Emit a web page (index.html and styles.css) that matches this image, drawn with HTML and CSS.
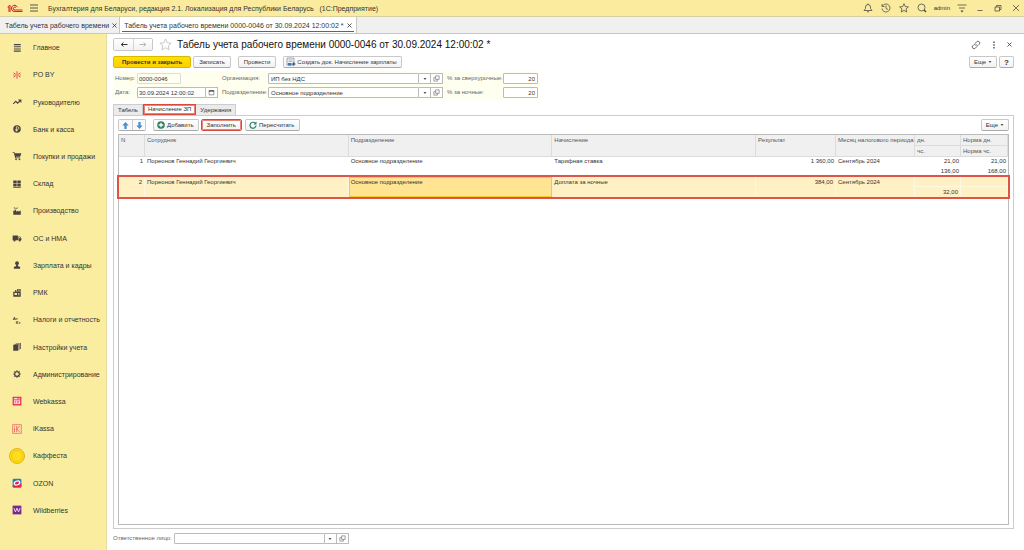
FILE: index.html
```html
<!DOCTYPE html>
<html lang="ru">
<head>
<meta charset="utf-8">
<title>Табель учета рабочего времени</title>
<link rel="stylesheet" href="styles.css">
</head>
<body>
<svg class="defs" aria-hidden="true">
  <symbol id="open" viewBox="0 0 12 12"><path d="M4.500 1.500h6v6h-6zM4.500 4.500h-3v6h6v-3" fill="none" stroke="#777" stroke-width="1.200"/></symbol>
  <symbol id="caret" viewBox="0 0 6 4"><path d="M0 0h6L3 4z" fill="#555"/></symbol>
  <symbol id="cross" viewBox="0 0 10 10"><path d="M1 1l8 8M9 1l-8 8" fill="none" stroke="currentColor" stroke-width="1.600"/></symbol>
</svg>
<header class="topbar">
  <svg class="logo" viewBox="0 0 32 18"><g fill="none" stroke="#d8232a" stroke-width="2"><path d="M1 6L6 2.500V16M2.500 7.500L4 6.500V16"/><path d="M21 6.500A6.300 6.300 0 1 0 16 15h15"/><path d="M18 7.500A3 3 0 1 0 16 12h15"/></g></svg>
  <button class="bare" aria-label="Меню"><svg class="i10" viewBox="0 0 10 10"><path d="M1 2h8M1 5h8M1 8h8" stroke="#555" stroke-width="1"/></svg></button>
  <span class="app-title">Бухгалтерия для Беларуси, редакция 2.1. Локализация для Республики Беларусь&nbsp;&nbsp; (1С:Предприятие)</span>
  <nav class="top-icons">
    <button class="bare" aria-label="Уведомления"><svg class="i10" viewBox="0 0 20 20"><path d="M2 15h16l-3-4V8a5 5 0 0 0-10 0v3zM8 17.500h4M10 1v2" class="ln"/></svg></button>
    <button class="bare" aria-label="История"><svg class="i10" viewBox="0 0 20 20"><path d="M3 6a8 8 0 1 1-1 5M2 2v5h5M10 5v6l4 2" class="ln"/></svg></button>
    <button class="bare" aria-label="Избранное"><svg class="i10" viewBox="0 0 20 20"><path d="M10 1.500l2.600 5.700 6.100.6-4.600 4.100 1.400 6.100L10 14.800 4.500 18l1.400-6.100L1.300 7.800l6.100-.6z" class="ln"/></svg></button>
    <button class="bare" aria-label="Поиск"><svg class="i10" viewBox="0 0 20 20"><circle cx="9" cy="9" r="7" class="ln"/><path d="M14 14l4 4" class="ln thick"/></svg></button>
    <span class="user">admin</span>
    <button class="bare" aria-label="Настройки"><svg class="i10" viewBox="0 0 20 20"><path d="M1 4h18M4 10h12" class="ln"/><path d="M7 15h6l-3 4z" fill="#444"/></svg></button>
    <button class="bare" aria-label="Свернуть"><svg class="i10" viewBox="0 0 20 20"><path d="M5 15h10" class="ln"/></svg></button>
    <button class="bare" aria-label="Восстановить"><svg class="i10" viewBox="0 0 20 20"><path d="M4 8h9v8H4zM7 8V5h9v8h-3" class="ln"/></svg></button>
    <button class="bare" aria-label="Закрыть"><svg class="i10" viewBox="0 0 20 20"><path d="M4 4l12 12M16 4L4 16" class="ln"/></svg></button>
  </nav>
</header>
<nav class="windows">
  <div class="window-tab"><a href="#">Табель учета рабочего времени</a><button class="bare" aria-label="Закрыть"><svg class="i5"><use href="#cross"/></svg></button></div>
  <div class="window-tab current"><a href="#">Табель учета рабочего времени 0000-0046 от 30.09.2024 12:00:02 *</a><button class="bare" aria-label="Закрыть"><svg class="i5"><use href="#cross"/></svg></button></div>
</nav>
<div class="body">
<nav class="sidebar">
  <a href="#"><svg viewBox="0 0 16 16"><path d="M3 2.500h11M3 6h11M3 9.500h11M3 13h11" stroke="#444" stroke-width="1.800"/></svg>Главное</a>
  <a href="#"><svg viewBox="0 0 16 16"><path d="M8 2v12M2.500 4.500L6 7M2.500 11.500L6 9M13.500 4.500L10 7M13.500 11.500L10 9M2 8h2M12 8h2" stroke="#e23c4c" stroke-width="1.500"/></svg>PO BY</a>
  <a href="#"><svg viewBox="0 0 16 16"><path d="M2 11l4-4 3 3 4-4" fill="none" stroke="#4a4242" stroke-width="1.800"/><path d="M9.500 4H15v5.500z" fill="#4a4242"/></svg>Руководителю</a>
  <a href="#"><svg viewBox="0 0 16 16"><circle cx="8" cy="8" r="6" fill="#4a4242"/><path d="M7 12V4.500h2a2 2 0 0 1 0 4H5.500M5.500 10.500h4" fill="none" stroke="#faeda0" stroke-width="1.200"/></svg>Банк и касса</a>
  <a href="#"><svg viewBox="0 0 16 16"><path d="M1 2h3l.5 1.500H15L13 9H6l.4 1.300H13v1.200H5.200L3 3.200H1z" fill="#4a4242"/><circle cx="6.500" cy="13.300" r="1.400" fill="#4a4242"/><circle cx="12" cy="13.300" r="1.400" fill="#4a4242"/></svg>Покупки и продажи</a>
  <a href="#"><svg viewBox="0 0 16 16"><path d="M2 2.500h5.500v4.500H2zM8.500 2.500H14v4.500H8.500zM2 8h5.500v4H2zM8.500 8H14v4H8.500zM2 12.800h12v1.200H2z" fill="#4a4242"/></svg>Склад</a>
  <a href="#"><svg viewBox="0 0 16 16"><path d="M2 14V7l2 1.500V6h2.500v3L10 7v2l4-2v7zM3 2l3 1v1.500L3 3.500zM7 3l2-1v1.500L7 5z" fill="#4a4242"/></svg>Производство</a>
  <a href="#"><svg viewBox="0 0 16 16"><path d="M1 4h8.500v7.500H1zM10.300 5.500H13l2 3v3h-4.700z" fill="#4a4242"/><circle cx="4" cy="12" r="1.700" fill="#4a4242"/><circle cx="12.300" cy="12" r="1.700" fill="#4a4242"/><path d="M11.500 6.500h1.200l1 1.700h-2.200z" fill="#faeda0"/></svg>ОС и НМА</a>
  <a href="#"><svg viewBox="0 0 16 16"><circle cx="8" cy="5" r="3" fill="#4a4242"/><path d="M6.500 7h3v2.500L13 11v3H3v-3l3.500-1.500z" fill="#4a4242"/></svg>Зарплата и кадры</a>
  <a href="#"><svg viewBox="0 0 16 16"><path d="M2 6h3V3h2v3h7v8H2zM8 2h6v3.500H8z" fill="#4a4242"/><path d="M4 8h4v3H4zM9.500 8H12v1H9.500zM9.500 10.500H12v1H9.500zM9.500 3h3v1h-3z" fill="#faeda0"/></svg>РМК</a>
  <a href="#"><svg viewBox="0 0 16 16"><text x="1" y="8" class="mini">Ат</text><text x="6" y="14" class="mini">Кт</text></svg>Налоги и отчетность</a>
  <a href="#"><svg viewBox="0 0 16 16"><path d="M2 4.500h8V14H2zM4 3h8v9.500h-1.200V3.800H4zM6 1.500h8V11h-1.200V2.300H6z" fill="#4a4242"/></svg>Настройки учета</a>
  <a href="#"><svg viewBox="0 0 16 16"><circle cx="8" cy="8" r="3.700" fill="none" stroke="#4a4242" stroke-width="1.800"/><path d="M8 2v2.500M8 11.500V14M2 8h2.500M11.500 8H14M3.800 3.800l1.700 1.700M10.500 10.500l1.700 1.700M12.200 3.800l-1.700 1.700M5.500 10.500l-1.700 1.700" stroke="#4a4242" stroke-width="1.800"/></svg>Администрирование</a>
  <a href="#"><svg viewBox="0 0 16 16"><rect x="1" y="1" width="14" height="14" rx="1" fill="#ee2b4c"/><path d="M3 3h10v10H3z" fill="#fbdcd8"/><path d="M3 6h10M4.500 8.500h2M8 8.500h3M4.500 11h2M8 11h3M8 4.300h4" stroke="#ee2b4c" stroke-width="1.200"/></svg>Webkassa</a>
  <a href="#"><svg viewBox="0 0 16 16"><path d="M1 1h14v14H1z" fill="#fbdfae" stroke="#e2574c"/><path d="M4 6v7M4 3v1.500M7.500 3v10M12.500 3L7.500 8l5 5" fill="none" stroke="#e2574c" stroke-width="1.200"/></svg>iKassa</a>
  <a href="#"><svg class="coin" viewBox="0 0 16 16"><circle cx="8" cy="8" r="7.500" fill="#ffe100" stroke="#d9a514" stroke-width=".8"/><circle cx="8" cy="8" r="5.500" fill="#ffdf1c" stroke="#eeb526" stroke-width=".7"/></svg>Каффеста</a>
  <a href="#"><svg viewBox="0 0 16 16"><rect x="1" y="1" width="14" height="14" rx="2" fill="#1f86b0"/><path d="M1 12c6 3 11-1 14-4v5a2 2 0 0 1-2 2H3a2 2 0 0 1-2-2z" fill="#ee1f55"/><ellipse cx="8" cy="8" rx="4.500" ry="3" transform="rotate(-22 8 8)" fill="#ee1f55" stroke="#fff" stroke-width="2"/></svg>OZON</a>
  <a href="#"><svg viewBox="0 0 16 16"><rect x="1" y="1" width="14" height="14" fill="#762a8c"/><path d="M3 5l2.500 6L8 5l2.500 6L13 5" fill="none" stroke="#f5d9f5" stroke-width="1.500"/></svg>Wildberries</a>
</nav>
<main>
  <div class="title-row">
    <div class="history"><button aria-label="Назад"><svg class="arrow" viewBox="0 0 16 10"><path d="M15 5H3M7 1L2.500 5 7 9" fill="none" stroke="#333" stroke-width="2"/></svg></button><button aria-label="Вперед"><svg class="arrow" viewBox="0 0 16 10"><path d="M1 5h12M9 1l4.500 4L9 9" fill="none" stroke="#999" stroke-width="1.400"/></svg></button></div>
    <button class="bare star" aria-label="В избранное"><svg viewBox="0 0 20 20"><path d="M10 1.500l2.600 5.900 6.100.6-4.600 4.100 1.400 6.100L10 15 4.500 18.200l1.400-6.100L1.300 8l6.100-.6z" fill="none" stroke="#bbb" stroke-width="1.200"/></svg></button>
    <h1>Табель учета рабочего времени 0000-0046 от 30.09.2024 12:00:02 *</h1>
    <div class="page-icons">
      <button class="bare" aria-label="Ссылка"><svg class="i10" viewBox="0 0 20 20"><path d="M9 6l2.500-2.500a3.500 3.500 0 0 1 5 5L14 11a3.500 3.500 0 0 1-5 0M11 14l-2.500 2.500a3.500 3.500 0 0 1-5-5L6 9a3.500 3.500 0 0 1 5 0" class="ln"/></svg></button>
      <button class="bare" aria-label="Действия"><svg class="i10" viewBox="0 0 20 20"><path d="M10 3v3M10 8.500v3M10 14v3" stroke="#555" stroke-width="3"/></svg></button>
      <button class="bare" aria-label="Закрыть"><svg class="i5"><use href="#cross"/></svg></button>
    </div>
  </div>
  <div class="commands">
    <button class="btn primary">Провести и закрыть</button>
    <button class="btn">Записать</button>
    <button class="btn post">Провести</button>
    <button class="btn create"><svg class="i10" viewBox="0 0 20 20"><path d="M2 2h14v14H2z" fill="#eef3f8" stroke="#7890a8" stroke-width="1.500"/><path d="M5 6h8M5 9h8" stroke="#9ab" stroke-width="1.500"/><path d="M4 12h7v5H4z" fill="#3c78b4"/><path d="M12 14h7M15.500 10.500v7" stroke="#444" stroke-width="2"/></svg>Создать док. Начисление зарплаты</button>
    <button class="btn more">Еще<svg class="caret"><use href="#caret"/></svg></button>
    <button class="btn help">?</button>
  </div>
  <form class="fields">
    <label for="num">Номер:</label><input id="num" class="number" value="0000-0046">
    <label for="org">Организация:</label>
    <div class="field"><input id="org" value="ИП без НДС"><button type="button" aria-label="Выбрать"><svg class="caret"><use href="#caret"/></svg></button><button type="button" aria-label="Открыть"><svg class="i7"><use href="#open"/></svg></button></div>
    <label for="over">% за сверхурочные:</label><input id="over" class="num" value="20">
    <label for="date">Дата:</label>
    <div class="field date"><input id="date" value="30.09.2024 12:00:02"><button type="button" aria-label="Календарь"><svg class="i7" viewBox="0 0 12 12"><path d="M2 3h8v7H2z" fill="none" stroke="#555"/><path d="M1.500 2h9v2.500h-9z" fill="#555"/></svg></button></div>
    <label for="dep">Подразделение:</label>
    <div class="field"><input id="dep" value="Основное подразделение"><button type="button" aria-label="Выбрать"><svg class="caret"><use href="#caret"/></svg></button><button type="button" aria-label="Открыть"><svg class="i7"><use href="#open"/></svg></button></div>
    <label for="night">% за ночные:</label><input id="night" class="num" value="20">
  </form>
  <div class="tabs"><button>Табель</button><button class="current marked">Начисление ЗП</button><button>Удержания</button></div>
  <section class="panel">
    <div class="toolbar">
      <div class="move"><button aria-label="Вверх"><svg class="i7" viewBox="0 0 12 12"><path d="M6 0l5.500 6H8v6H4V6H.5z" fill="#4d8fcb"/></svg></button><button aria-label="Вниз"><svg class="i7" viewBox="0 0 12 12"><path d="M6 12l5.500-6H8V0H4v6H.5z" fill="#4d8fcb"/></svg></button></div>
      <button class="btn add"><svg class="i8" viewBox="0 0 16 16"><circle cx="8" cy="8" r="7.500" fill="#2a7f62"/><path d="M8 3.500v9M3.500 8h9" stroke="#fff" stroke-width="2.600"/></svg>Добавить</button>
      <button class="btn fill marked">Заполнить</button>
      <button class="btn recalc"><svg class="i8" viewBox="0 0 16 16"><path d="M12.500 4.500A6 6 0 1 0 14 9" fill="none" stroke="#2a7f62" stroke-width="2.400"/><path d="M15 1v6H9z" fill="#2a7f62"/></svg>Пересчитать</button>
      <button class="btn more">Еще<svg class="caret"><use href="#caret"/></svg></button>
    </div>
    <div class="grid">
      <table>
        <colgroup><col class="c-n"><col><col><col><col class="c-sum"><col class="c-month"><col class="c-days"><col class="c-norm"></colgroup>
        <thead>
          <tr><th rowspan="2">N</th><th rowspan="2">Сотрудник</th><th rowspan="2">Подразделение</th><th rowspan="2">Начисление</th><th rowspan="2">Результат</th><th rowspan="2">Месяц налогового периода</th><th>дн.</th><th>Норма дн.</th></tr>
          <tr><th>чс.</th><th>Норма чс.</th></tr>
        </thead>
        <tbody>
          <tr><td rowspan="2" class="r">1</td><td rowspan="2">Пореонов Геннадий Георгиевич</td><td rowspan="2">Основное подразделение</td><td rowspan="2">Тарифная ставка</td><td rowspan="2" class="r">1 360,00</td><td rowspan="2">Сентябрь 2024</td><td class="r">21,00</td><td class="r">21,00</td></tr>
          <tr><td class="r">136,00</td><td class="r">168,00</td></tr>
        </tbody>
        <tbody class="selected">
          <tr><td rowspan="2" class="r">2</td><td rowspan="2">Пореонов Геннадий Георгиевич</td><td rowspan="2" class="cell">Основное подразделение</td><td rowspan="2">Доплата за ночные</td><td rowspan="2" class="r">384,00</td><td rowspan="2">Сентябрь 2024</td><td class="r line"></td><td class="r line"></td></tr>
          <tr><td class="r">32,00</td><td class="r"></td></tr>
        </tbody>
      </table>
    </div>
  </section>
  <div class="footer"><label for="resp">Ответственное лицо:</label><div class="field resp"><input id="resp"><button type="button" aria-label="Выбрать"><svg class="caret"><use href="#caret"/></svg></button><button type="button" aria-label="Открыть"><svg class="i7"><use href="#open"/></svg></button></div></div>
</main>
</div>
</body>
</html>
```
FILE: styles.css
```css
* { box-sizing: border-box; }
body {
  margin: 0;
  min-height: 100vh;
  display: flex;
  flex-direction: column;
  background: #fff;
  color: #333;
  font: 7px/9px "Liberation Sans", Arial, sans-serif;
}
button, input { font: inherit; color: inherit; margin: 0; }
a { color: inherit; text-decoration: none; }
svg { display: block; flex: none; }
.defs { display: none; }
.i5 { width: 5px; height: 5px; }
.i7 { width: 7px; height: 7px; }
.i8 { width: 8px; height: 8px; }
.i10 { width: 10px; height: 10px; }
.caret { width: 4px; height: 2px; }
.ln { fill: none; stroke: #444; stroke-width: 1.5; }
.thick { stroke-width: 3; }
.bare { border: 0; padding: 0; background: none; }

.topbar {
  display: flex;
  align-items: center;
  height: 17px;
  padding: 0 3px 0 7px;
  background: #faeb9e;
  border-bottom: 1px solid #d8cfa0;
}
.logo { width: 16px; height: 9px; margin-right: 6px; }
.app-title { margin-left: 9px; white-space: nowrap; }
.top-icons { display: flex; align-items: center; gap: 8px; margin-left: auto; }
.user { margin: 0 -1px; font-size: 6px; }

.windows { display: flex; height: 17px; background: #f0f0f0; border-bottom: 1px solid #c6c6c6; }
.window-tab {
  display: flex;
  align-items: center;
  gap: 3px;
  padding: 0 2px 0 5px;
  border-right: 1px solid #c6c6c6;
  white-space: nowrap;
}
.window-tab.current {
  padding: 0 4px;
  background: linear-gradient(#0f9158, #0f9158) center 14px / calc(100% - 4px) 1px no-repeat #fff;
}

.body { flex: 1; display: flex; }
.sidebar {
  flex: none;
  width: 107px;
  display: flex;
  flex-direction: column;
  padding: 0 0 26px 12px;
  background: #faeda0;
  border-right: 1px solid #e6dca0;
}
.sidebar a { flex: 1; display: flex; align-items: center; gap: 11px; white-space: nowrap; }
.sidebar svg { width: 10px; height: 10px; }
.sidebar .coin { width: 16px; height: 16px; margin: 0 -3px; }
.mini { font-size: 7px; font-weight: bold; fill: #4a4242; }

main { flex: 1; min-width: 0; display: flex; flex-direction: column; padding: 4px 10px 6px 6px; font-size: 6px; }
.title-row { display: flex; align-items: center; height: 13px; }
.history { display: flex; border: 1px solid #c8c8c8; border-radius: 2px; }
.history button {
  width: 19px;
  height: 11px;
  padding: 0;
  border: 0;
  background: linear-gradient(#fff, #f2f2f2);
  display: grid;
  place-items: center;
}
.history button + button { border-left: 1px solid #d5d5d5; }
.arrow { width: 8px; height: 5px; }
.star { margin: 0 5px 0 6px; }
.star svg { width: 13px; height: 13px; }
h1 { margin: 0; font-size: 10px; font-weight: normal; line-height: 13px; color: #111; white-space: nowrap; }
.page-icons { display: flex; align-items: center; gap: 8px; margin-left: auto; padding-right: 2px; }

.commands, .toolbar { display: flex; align-items: center; }
.commands { gap: 2px; margin-top: 5px; }
.btn {
  display: flex;
  align-items: center;
  justify-content: center;
  gap: 2px;
  height: 12px;
  padding: 0 5px;
  border: 1px solid #c8c8c8;
  border-bottom-color: #aaa;
  border-radius: 2px;
  background: linear-gradient(#fff, #f2f2f2);
  white-space: nowrap;
}
.primary { padding: 0 8px; font-weight: bold; background: linear-gradient(#ffe100, #fbcf00); border-color: #d9b800; }
.post { margin-left: 5px; }
.create { margin-left: 5px; padding: 0 4px 0 2px; gap: 1px; }
.more { margin-left: auto; padding: 0 4px; }
.help { padding: 0 4px; font-weight: bold; font-size: 8px; }

.fields {
  align-self: flex-start;
  display: grid;
  grid-template-columns: 18px 81px 42px 175px 52px 35px;
  column-gap: 4px;
  row-gap: 3px;
  align-items: center;
  margin-top: 3px;
  padding: 2px 1px 2px 2px;
  background: #fffff0;
}
label { color: #666; white-space: nowrap; }
input {
  width: 100%;
  min-width: 0;
  height: 11px;
  padding: 0 2px;
  border: 1px solid #bbb;
  border-radius: 1px;
  background: #fff;
}
.number { width: 44px; padding: 0 1px; background: #fffff0; border-color: #ddd; }
.date input { padding: 0 1px; }
.num { text-align: right; }
.field { display: flex; }
.field input { flex: 1; border-radius: 1px 0 0 1px; }
.field button {
  width: 12px;
  height: 11px;
  padding: 0;
  border: 1px solid #bbb;
  border-left: 0;
  background: #fff;
  display: grid;
  place-items: center;
}

.tabs { display: flex; margin-top: 4px; }
.tabs button {
  height: 11px;
  padding: 0 4px;
  border: 1px solid #ccc;
  border-bottom: 0;
  border-left-width: 0;
  background: #ebebeb;
}
.tabs button:first-child { border-left-width: 1px; }
.tabs .current { background: #fff; }
.marked, .tabs .marked { border: 1px solid #d9483b; outline: 1px solid #e98379; outline-offset: -2px; }

.panel {
  flex: 1;
  display: flex;
  flex-direction: column;
  gap: 3px;
  padding: 3px 4px 3px 4px;
  border: 1px solid #ccc;
}
.move { display: flex; border: 1px solid #c8c8c8; border-bottom-color: #aaa; border-radius: 2px; }
.move button {
  width: 13px;
  height: 10px;
  padding: 0;
  border: 0;
  background: #fafafa;
  display: grid;
  place-items: center;
}
.move button + button { border-left: 1px solid #ccc; }
.add { margin-left: 7px; }
.add, .recalc { padding: 0 4px 0 3px; }
.fill { margin-left: 2px; }
.recalc { margin-left: 3px; }

.grid { flex: 1; border: 1px solid #bbb; }
table { width: 100%; border-collapse: separate; border-spacing: 0; table-layout: fixed; }
.c-n { width: 26px; }
.c-sum { width: 80px; }
.c-month { width: 79px; }
.c-days { width: 46px; }
.c-norm { width: 47px; }
th, td { padding: 0 2px; height: 10px; line-height: 9px; vertical-align: top; text-align: left; white-space: nowrap; }
th {
  height: 11px;
  padding-top: 1px;
  font-weight: normal;
  color: #555;
  background: #f0f0f0;
  border-right: 1px solid #dcdcdc;
  border-bottom: 1px solid #dcdcdc;
}
td.r { text-align: right; }
.selected td { padding-top: 1px; background: #fff1c4; border-right: 1px solid #fff8e0; }
.selected td.line { border-bottom: 1px solid #fff8e0; }
.selected { outline: 2px solid #dc5548; }
.selected td.cell { background: #ffe591; border: 1px solid #f5cb27; padding: 0 1px; }

.footer { display: flex; align-items: center; gap: 2px; margin-top: 4px; }
.resp { width: 175px; }
```
